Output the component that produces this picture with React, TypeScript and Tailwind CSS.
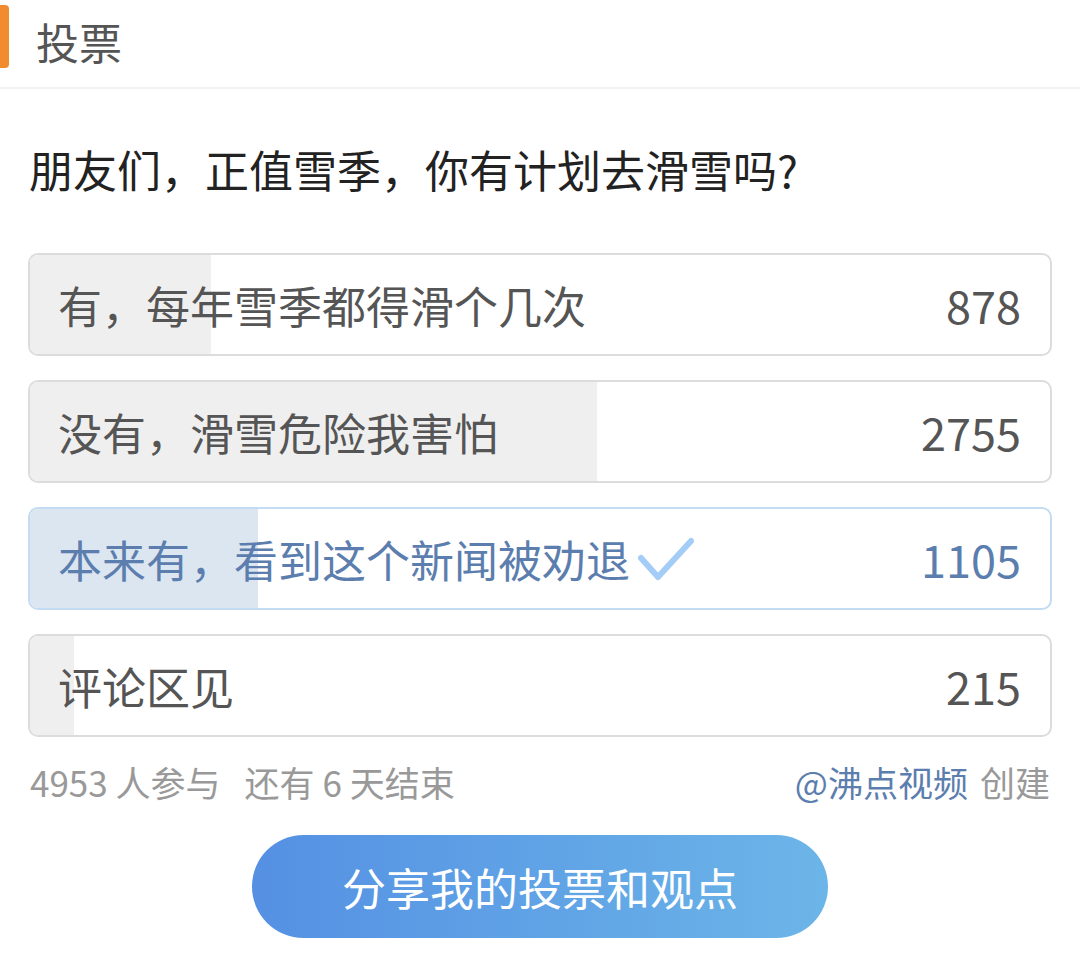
import React from "react";

const options = [
  { label: "有，每年雪季都得滑个几次", count: 878 },
  { label: "没有，滑雪危险我害怕", count: 2755 },
  { label: "本来有，看到这个新闻被劝退", count: 1105, selected: true },
  { label: "评论区见", count: 215 },
];
const total = 4953;

export default function App() {
  return (
    <div
      className="w-[1080px] h-[964px] bg-white overflow-hidden"
      style={{ fontFamily: '"Noto Sans CJK SC", "Noto Sans", sans-serif' }}
    >
      <div className="h-[89px] border-b-2 border-[#f2f2f2] flex items-start">
        <div className="w-[9px] h-[63px] mt-[5px] bg-[#f28a2e] rounded-r-[4px]" />
        <div className="ml-[27px] mt-[13px] text-[43px] leading-[56px] text-[#555]">投票</div>
      </div>
      <div className="px-[29px] pt-[50px] text-[44px] leading-[60px] text-[#222]">
        朋友们，正值雪季，你有计划去滑雪吗?
      </div>
      <div className="px-[28px] pt-[54px] flex flex-col gap-[24px]">
        {options.map((o) => {
          const pct = (o.count / total) * 100;
          const sel = !!o.selected;
          return (
            <div
              key={o.label}
              className={
                "relative h-[103px] rounded-[10px] border-2 overflow-hidden " +
                (sel ? "border-[#c3dbf3]" : "border-[#dcdcdc]")
              }
            >
              <div
                className={"absolute left-0 top-0 bottom-0 " + (sel ? "bg-[#dce6f1]" : "bg-[#efefef]")}
                style={{ width: pct + "%" }}
              />
              <div className="relative h-full flex items-center justify-between pl-[28px] pr-[29px]">
                <div
                  className={
                    "flex items-center text-[44px] leading-[60px] " + (sel ? "text-[#5b7eae]" : "text-[#555]")
                  }
                >
                  <span>{o.label}</span>
                  {sel && (
                    <svg width="60" height="48" viewBox="0 0 60 48" className="ml-[6px] mt-[2px]">
                      <path
                        d="M5 22 L22 41 L55 5"
                        fill="none"
                        stroke="#a3ccf6"
                        strokeWidth="6"
                        strokeLinecap="round"
                        strokeLinejoin="round"
                      />
                    </svg>
                  )}
                </div>
                <div className={"text-[45px] leading-[60px] " + (sel ? "text-[#5b7eae]" : "text-[#555]")}>
                  {o.count}
                </div>
              </div>
            </div>
          );
        })}
      </div>
      <div className="px-[30px] pt-[21px] flex justify-between items-center text-[35px] leading-[48px] text-[#999]">
        <div>
          4953 人参与<span className="ml-[24px]">还有 6 天结束</span>
        </div>
        <div>
          <span className="text-[#5b7eae]">@沸点视频</span>
          <span className="ml-[12px]">创建</span>
        </div>
      </div>
      <div className="flex justify-center pt-[29px]">
        <div className="w-[576px] h-[103px] rounded-full bg-gradient-to-r from-[#5590e3] to-[#6cb5e8] flex items-center justify-center text-white text-[44px] leading-[60px]">
          分享我的投票和观点
        </div>
      </div>
    </div>
  );
}
